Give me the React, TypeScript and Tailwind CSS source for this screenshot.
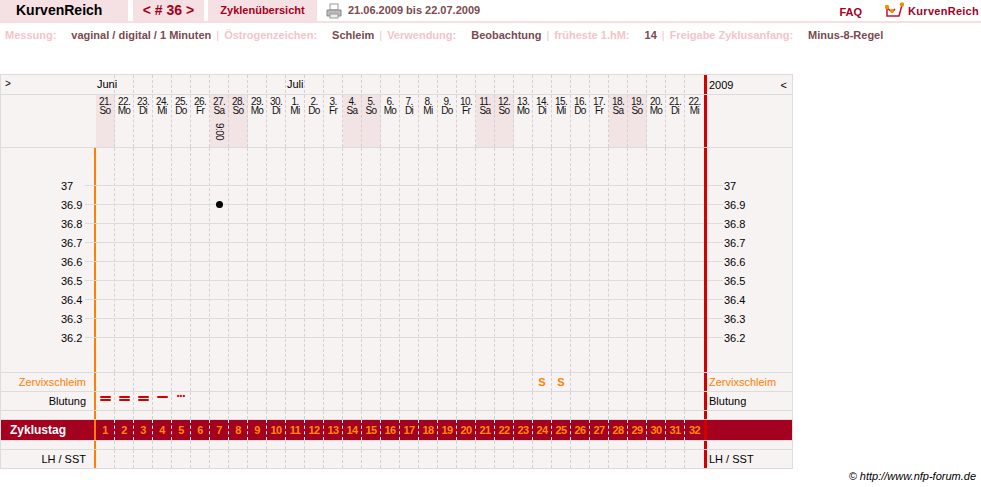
import React from "react";

const days = [
  ...Array.from({ length: 10 }, (_, i) => 21 + i),
  ...Array.from({ length: 22 }, (_, i) => 1 + i),
];
const wd = ["So", "Mo", "Di", "Mi", "Do", "Fr", "Sa"];
const temps = ["37", "36.9", "36.8", "36.7", "36.6", "36.5", "36.4", "36.3", "36.2"];

function DayCells({ h, render, shade }: { h: string; render?: (i: number) => React.ReactNode; shade?: boolean }) {
  return (
    <div className={`grid grid-cols-[repeat(32,19px)] ${h}`}>
      {days.map((d, i) => {
        const we = shade && (i % 7 === 0 || i % 7 === 6);
        return (
          <div key={i} className={`border-r border-dashed border-[#d6d0d0] ${we ? "bg-[#f2e3e5]" : ""} ${i === 31 ? "border-r-0" : ""}`}>
            {render?.(i)}
          </div>
        );
      })}
    </div>
  );
}

function Row({ left, right, h, render, cls = "", orange = true, shade }: any) {
  return (
    <div className={`flex border-b border-[#dcdcdc] ${cls}`}>
      <div className={`w-[95px] shrink-0 ${orange ? "border-r-2 border-[#ff8000]" : "border-r-2 border-transparent"}`}>{left}</div>
      <DayCells h={h} render={render} shade={shade} />
      <div className="w-[3px] shrink-0 bg-[#d40000]" />
      <div className="w-[86px] shrink-0 px-[2px]">{right}</div>
    </div>
  );
}

export default function App() {
  return (
    <div className="w-[981px] h-[487px] bg-white text-[11px] [font-family:Liberation_Sans,Arial,sans-serif] relative">
      {/* top bar */}
      <div className="flex items-stretch h-[23px] border-b-2 border-[#f5dfe1]">
        <div className="w-[128px] bg-[#f5e1e3] font-bold text-[14px] text-black pl-[16px] flex items-center">KurvenReich</div>
        <div className="ml-[5px] w-[71px] bg-[#f5e1e3] font-bold text-[14px] text-[#a4001f] flex items-center justify-center">&lt; # 36 &gt;</div>
        <div className="ml-[4px] w-[109px] bg-[#f5e1e3] font-bold text-[#a4001f] flex items-center justify-center">Zyklenübersicht</div>
        <div className="ml-[9px] flex items-center gap-[6px] text-[#7a4a50] font-bold">
          <svg width="16" height="16" viewBox="0 0 16 16">
            <rect x="4" y="1" width="8" height="6" fill="#fff" stroke="#999" />
            <path d="M1 7h14v6H1z" fill="#bbb" stroke="#888" />
            <rect x="4" y="11" width="8" height="4" fill="#eee" stroke="#999" />
          </svg>
          21.06.2009 bis 22.07.2009
        </div>
        <div className="ml-auto flex items-end gap-[22px] pr-[2px]">
          <span className="text-[#a4001f] font-bold mb-[1px]">FAQ</span>
          <div className="flex items-center gap-[4px] self-start mt-[2px]">
            <svg width="20" height="18" viewBox="0 0 20 18">
              <path d="M3 6v8h12l3-11" fill="none" stroke="#c8102e" strokeWidth="1.5" />
              <path d="M3 6l5 4 3-3" fill="none" stroke="#c8102e" strokeWidth="1.5" />
              <circle cx="3" cy="5" r="2.2" fill="#f29100" />
              <circle cx="8" cy="9" r="2" fill="#f29100" />
              <circle cx="18" cy="2.5" r="2.2" fill="#f29100" />
            </svg>
            <span className="text-[#a4001f] font-bold text-[11px] tracking-wide">KurvenReich</span>
          </div>
        </div>
      </div>
      {/* info bar */}
      <div className="flex items-center h-[24px] pl-[5px] gap-[5px]">
        {[
          ["Messung:", "vaginal / digital / 1 Minuten"],
          ["Östrogenzeichen:", "Schleim"],
          ["Verwendung:", "Beobachtung"],
          ["früheste 1.hM:", "14"],
          ["Freigabe Zyklusanfang:", "Minus-8-Regel"],
        ].map(([k, v], i) => (
          <React.Fragment key={i}>
            {i > 0 && <span className="text-[#f4c4c8]">|</span>}
            <span className="text-[#f4c4c8] font-bold">{k}</span>
            <span className="text-[#7a4a50] font-bold ml-[10px]">{v}</span>
          </React.Fragment>
        ))}
      </div>

      {/* chart */}
      <div className="mt-[27px] w-[793px] border border-[#dcdcdc] bg-[#f8f3f3] text-black">
        <Row
          h="h-[18px]"
          orange={false}
          left={<span className="pl-[4px] text-[10px]">&gt;</span>}
          render={(i: number) =>
            i === 0 ? <span className="pl-[1px] relative top-[1px] whitespace-nowrap">Juni</span> : i === 10 ? <span className="pl-[1px] relative top-[1px] whitespace-nowrap">Juli</span> : null
          }
          right={<div className="flex justify-between pt-[2px] pr-[4px]"><span>2009</span><span>&lt;</span></div>}
        />
        <Row
          h="h-[52px]"
          orange={false}
          shade
          render={(i: number) => (
            <div className="flex flex-col items-center leading-[9px] text-[10px] tracking-[-0.6px] pt-[2px] text-[#111] whitespace-nowrap">
              <span>{days[i]}.</span>
              <span>{wd[i % 7]}</span>
              {i === 6 && <span className="mt-[8px] [writing-mode:vertical-rl] leading-[10px]">9:00</span>}
            </div>
          )}
        />
        {/* temperature area */}
        <div className="relative">
          <Row h="h-[224px]" render={() => null} />
          {temps.map((t, k) => (
            <div key={t} className="absolute left-0 w-full h-0" style={{ top: 37 + k * 19 }}>
              <span className="absolute left-[60px] -top-[7px]">{t}</span>
              <div className="absolute left-[84px] w-[619px] border-t border-[#dcdcdc]" />
              <div className="absolute left-[706px] w-[16px] border-t border-[#dcdcdc]" />
              <span className="absolute left-[723px] -top-[7px]">{t}</span>
            </div>
          ))}
          <div className="absolute w-[7px] h-[7px] rounded-full bg-black left-[215px] top-[53px]" />
        </div>
        <Row
          h="h-[18px]"
          left={<div className="text-right pr-[8px] text-[#ff8000] leading-[18px]">Zervixschleim</div>}
          right={<span className="text-[#ff8000] leading-[18px]">Zervixschleim</span>}
          render={(i: number) =>
            i === 23 || i === 24 ? <div className="text-center font-bold text-[#ff8000] leading-[18px]">S</div> : null
          }
        />
        <Row
          h="h-[18px]"
          left={<div className="text-right pr-[8px] leading-[18px]">Blutung</div>}
          right={<span className="leading-[18px]">Blutung</span>}
          render={(i: number) =>
            i < 3 ? (
              <div className="flex flex-col items-center gap-[1px] pt-[4px]">
                <div className="w-[11px] h-[2px] bg-[#d40000] rounded" />
                <div className="w-[11px] h-[2px] bg-[#d40000] rounded" />
              </div>
            ) : i === 3 ? (
              <div className="flex justify-center pt-[4px]"><div className="w-[11px] h-[2px] bg-[#d40000] rounded" /></div>
            ) : i === 4 ? (
              <div className="text-center text-[#d40000] text-[8px] leading-[8px] font-bold">•••</div>
            ) : null
          }
        />
        <Row h="h-[8px]" />
        <div className="flex border-b border-[#dcdcdc] bg-[#a4001f]">
          <div className="w-[95px] shrink-0 border-r-2 border-[#ff8000] text-white font-bold text-[12px] pl-[9px] leading-[20px]">Zyklustag</div>
          <div className="grid grid-cols-[repeat(32,19px)] h-[20px]">
            {days.map((_, i) => (
              <div key={i} className={`border-r border-dashed border-white text-center text-[#ff8c00] font-bold leading-[20px] tracking-[-0.5px] ${i === 31 ? "border-r-0" : ""}`}>
                {i + 1}
              </div>
            ))}
          </div>
          <div className="w-[3px] shrink-0 bg-[#d40000]" />
          <div className="w-[86px]" />
        </div>
        <Row h="h-[8px]" />
        <Row
          h="h-[18px]"
          cls="border-b-0"
          left={<div className="text-right pr-[8px] leading-[18px]">LH / SST</div>}
          right={<span className="leading-[18px]">LH / SST</span>}
        />
      </div>
      <div className="absolute right-[5px] top-[468px] italic text-[11px] text-black">© http://www.nfp-forum.de</div>
    </div>
  );
}
